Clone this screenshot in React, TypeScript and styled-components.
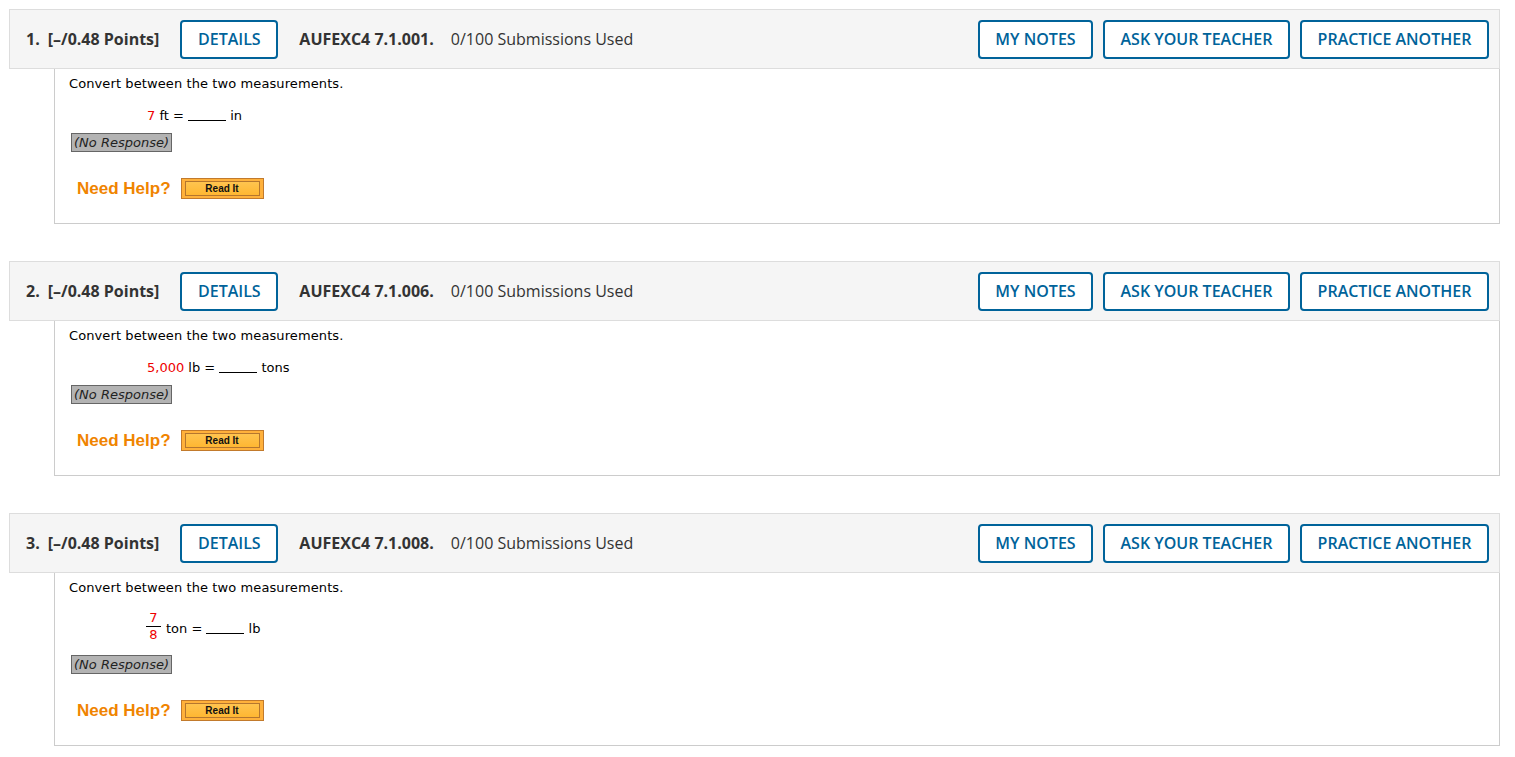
import React from 'react';
import styled, { createGlobalStyle } from 'styled-components';

const GlobalStyle = createGlobalStyle`
  html, body {
    margin: 0;
    padding: 0;
    background: #ffffff;
  }
`;

const Page = styled.div`
  padding: 9px 15px 0 9px;
  display: flex;
  flex-direction: column;
  gap: 37px;
`;

const Question = styled.section`
  display: flex;
  flex-direction: column;
`;

const Header = styled.div`
  display: flex;
  align-items: center;
  height: 58px;
  padding: 0 10px 0 16px;
  background: #f5f5f5;
  border: 1px solid #dddddd;
  font-family: 'Open Sans', 'Liberation Sans', sans-serif;
  font-size: 16px;
  color: #333333;
`;

const Number = styled.span`
  font-weight: 700;
  margin-right: 8px;
`;

const Points = styled.span`
  font-weight: 700;
  margin-right: 21px;
`;

const Code = styled.span`
  font-weight: 700;
  margin: 0 17px 0 21px;
`;

const Spacer = styled.div`
  flex: 1;
`;

const Actions = styled.div`
  display: flex;
  gap: 10px;
`;

const HeaderButton = styled.button<{ $w: number }>`
  width: ${p => p.$w}px;
  height: 39px;
  box-sizing: border-box;
  border: 2px solid #00639a;
  border-radius: 4px;
  background: #ffffff;
  color: #00639a;
  font-family: 'Open Sans', 'Liberation Sans', sans-serif;
  font-size: 16px;
  font-weight: 600;
  padding: 0;
  cursor: pointer;
`;

const Body = styled.div`
  margin-left: 45px;
  border: 1px solid #cccccc;
  border-top: none;
  padding: 6px 14px 24px 14px;
  display: flex;
  flex-direction: column;
  align-items: flex-start;
`;

const Prompt = styled.p`
  margin: 0;
  font-family: 'DejaVu Sans', Verdana, sans-serif;
  font-size: 13px;
  letter-spacing: 0.1px;
  color: #000000;
  line-height: 17px;
`;

const Equation = styled.div`
  display: flex;
  align-items: center;
  margin: 14px 0 0 78px;
  font-family: 'DejaVu Sans', Verdana, sans-serif;
  font-size: 13px;
  color: #000000;
  min-height: 18px;
  white-space: pre;
`;

const Given = styled.span`
  color: #ee0000;
`;

const Blank = styled.span`
  display: inline-block;
  width: 38px;
  height: 11px;
  border-bottom: 1px solid #000000;
`;

const Fraction = styled.span`
  display: inline-flex;
  flex-direction: column;
  align-items: center;
  color: #ee0000;
  line-height: 15px;
  margin: 0 5px 4px -1px;
`;

const FractionBar = styled.span`
  width: 15px;
  border-top: 1px solid #000000;
  margin: 1px 0 0;
`;

const NoResponse = styled.div`
  margin: 9px 0 0 2px;
  padding: 0 2px;
  height: 19px;
  box-sizing: border-box;
  background: #b3b3b3;
  border: 1px solid #666666;
  font-family: 'DejaVu Sans', Verdana, sans-serif;
  font-style: italic;
  font-size: 13px;
  line-height: 17px;
  color: #222222;
`;

const Help = styled.div`
  display: flex;
  align-items: center;
  gap: 10px;
  margin: 26px 0 0 8px;
`;

const HelpLabel = styled.span`
  font-family: 'Liberation Sans', Arial, sans-serif;
  font-weight: 700;
  font-size: 17px;
  color: #f08400;
`;

const ReadIt = styled.span`
  display: inline-flex;
  align-items: center;
  justify-content: center;
  width: 83px;
  height: 21px;
  box-sizing: border-box;
  border: 1px solid #c27a2c;
  background: #ffb13b;
  padding: 2px 3px;
`;

const ReadItInner = styled.span`
  flex: 1;
  height: 100%;
  box-sizing: border-box;
  border: 1px solid #b5762e;
  background: linear-gradient(#ffc44f, #ffb732);
  font-family: 'Liberation Sans', Arial, sans-serif;
  font-weight: 700;
  font-size: 10px;
  line-height: 13px;
  text-align: center;
  color: #111111;
`;

type Item = {
  n: number;
  code: string;
  equation: React.ReactNode;
};

const items: Item[] = [
  {
    n: 1,
    code: 'AUFEXC4 7.1.001.',
    equation: (
      <>
        <Given>7</Given> ft = <Blank /> in
      </>
    ),
  },
  {
    n: 2,
    code: 'AUFEXC4 7.1.006.',
    equation: (
      <>
        <Given>5,000</Given> lb = <Blank /> tons
      </>
    ),
  },
  {
    n: 3,
    code: 'AUFEXC4 7.1.008.',
    equation: (
      <>
        <Fraction>
          <span>7</span>
          <FractionBar />
          <span>8</span>
        </Fraction>
        ton = <Blank /> lb
      </>
    ),
  },
];

const App = () => {
  return (
    <>
      <GlobalStyle />
      <Page>
        {items.map(item => (
          <Question key={item.n}>
            <Header>
              <Number>{item.n}.</Number>
              <Points>[–/0.48 Points]</Points>
              <HeaderButton $w={98}>DETAILS</HeaderButton>
              <Code>{item.code}</Code>
              <span>0/100 Submissions Used</span>
              <Spacer />
              <Actions>
                <HeaderButton $w={115}>MY NOTES</HeaderButton>
                <HeaderButton $w={187}>ASK YOUR TEACHER</HeaderButton>
                <HeaderButton $w={189}>PRACTICE ANOTHER</HeaderButton>
              </Actions>
            </Header>
            <Body>
              <Prompt>Convert between the two measurements.</Prompt>
              <Equation>{item.equation}</Equation>
              <NoResponse>(No Response)</NoResponse>
              <Help>
                <HelpLabel>Need Help?</HelpLabel>
                <ReadIt>
                  <ReadItInner>Read It</ReadItInner>
                </ReadIt>
              </Help>
            </Body>
          </Question>
        ))}
      </Page>
    </>
  );
};

export default App;
